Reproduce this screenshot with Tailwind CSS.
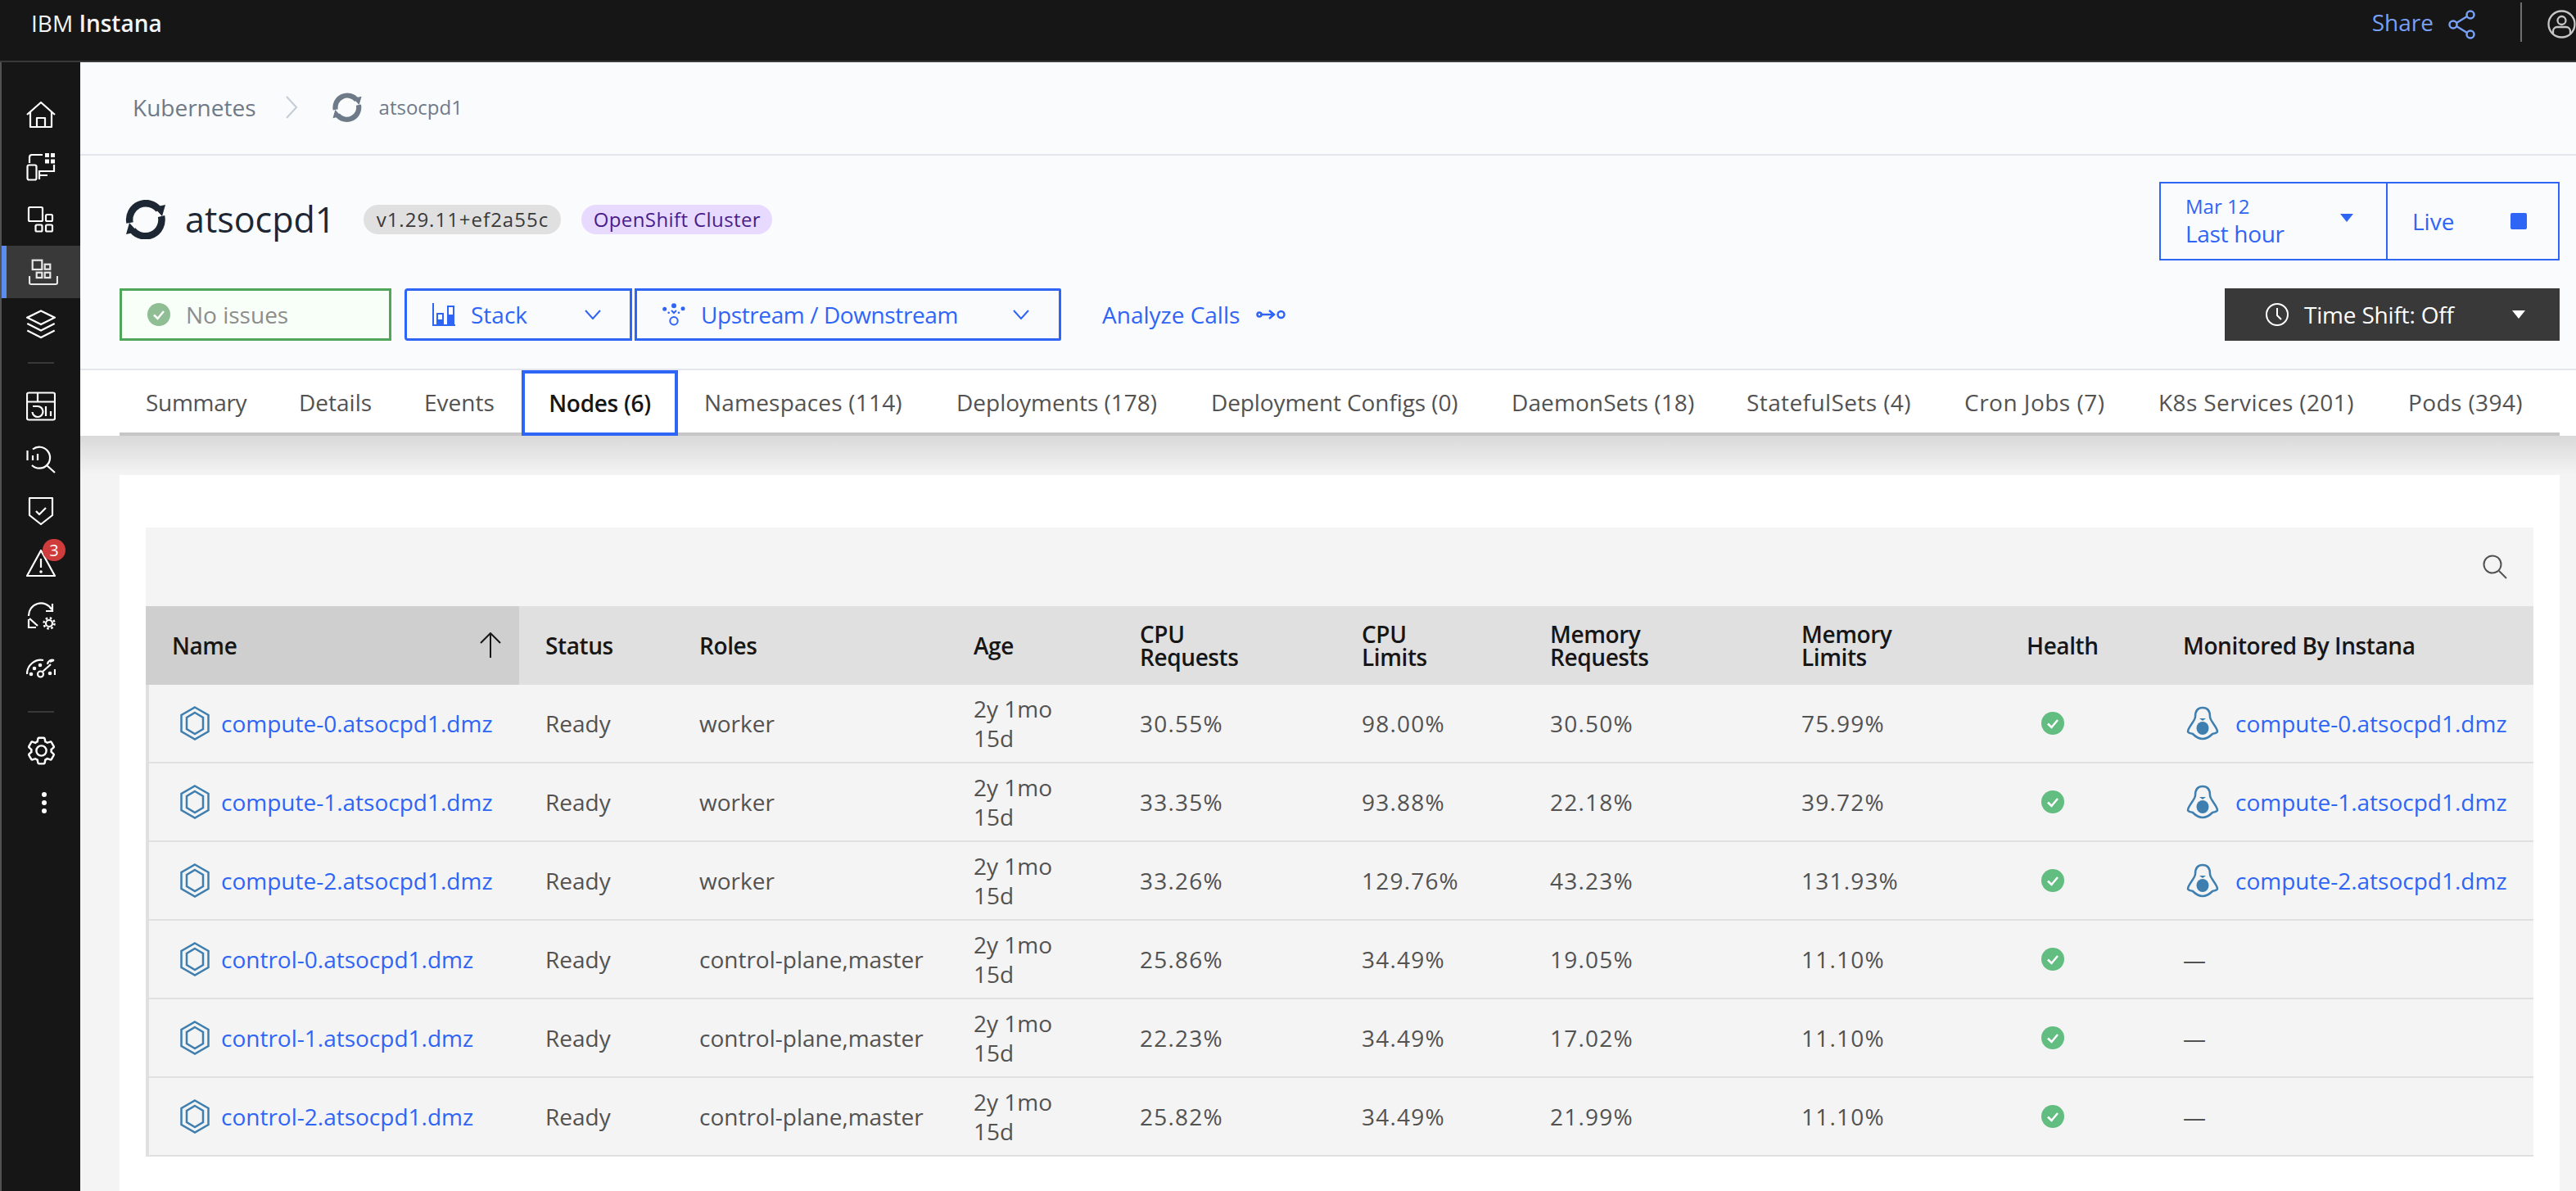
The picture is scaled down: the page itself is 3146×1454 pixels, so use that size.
<!doctype html>
<html><head><meta charset="utf-8"><script src="https://cdn.jsdelivr.net/npm/@tailwindcss/browser@4"></script></head>
<body class="h-[1454px] overflow-hidden bg-[#f4f4f4] font-['Open_Sans',sans-serif] text-[28px] leading-[36px] text-[#525252]">
<div class="flex h-full flex-col">
  <header class="flex h-[76px] shrink-0 items-start border-b-2 border-[#393939] bg-[#161616] pl-[38px] text-[#f4f4f4]">
    <div class="mt-[8px] text-[28px] leading-[40px]">IBM <span class="font-semibold">Instana</span></div>
    <div class="ml-auto mt-[8px] flex items-start text-[#78a0f5]">
      <span class="leading-[38px]">Share</span>
      <svg class="ml-[18px] mt-[4px]" width="34" height="36" viewBox="0 0 34 36" fill="none" stroke="currentColor" stroke-width="2.5"><circle cx="6" cy="18" r="4.5"/><circle cx="27" cy="6" r="4.5"/><circle cx="27" cy="30" r="4.5"/><path d="M10 16 23 8M10 20 23 28"/></svg>
      <div class="ml-[54px] mt-[-5px] h-[48px] w-[2px] bg-[#6f6f6f]"></div>
      <svg class="ml-[31px] mt-[4px]" width="35" height="35" viewBox="0 0 35 35" fill="none" stroke="#c6c6c6" stroke-width="2.3"><circle cx="17.5" cy="17.5" r="16"/><circle cx="17.5" cy="13" r="5"/><path d="M7 29V26a5 5 0 0 1 5-5H23a5 5 0 0 1 5 5V29"/></svg>
    </div>
  </header>
  <div class="flex min-h-0 flex-1">
    <nav class="flex w-[98px] shrink-0 flex-col border-l-2 border-[#525252] bg-[#161616] pt-[32px] text-white">
      <a class="flex h-[64px] items-center justify-center"><svg width="36" height="36" viewBox="0 0 36 36" fill="none" stroke="currentColor" stroke-width="2.2" stroke-linejoin="round"><path d="M1 18 18 3 35 18M5 15V33H31V15M13 33V22H23V33"/></svg></a>
      <a class="flex h-[64px] items-center justify-center"><svg width="36" height="36" viewBox="0 0 36 36" fill="none" stroke="currentColor" stroke-width="2.2"><rect x="1.5" y="15.5" width="11" height="18" rx="2"/><path d="M4 13V6a3 3 0 0 1 3-3H20M34 15V23H16V33M16 28H26"/><path fill="currentColor" stroke="none" d="M23 1h5v5h-5zM30 1h5v5h-5zM23 8.500h5v5h-5zM30 8.500h5v5h-5z"/></svg></a>
      <a class="flex h-[64px] items-center justify-center"><svg width="36" height="36" viewBox="0 0 36 36" fill="none" stroke="currentColor" stroke-width="2.2"><rect x="3" y="3" width="17" height="17" rx="1.500"/><rect x="24" y="12" width="8" height="8" rx="1.500"/><rect x="11.500" y="24.500" width="8" height="8" rx="1.500"/><rect x="24" y="24.500" width="8" height="8" rx="1.500"/></svg></a>
      <a class="flex h-[64px] items-center justify-center border-l-[6px] border-[#5b8def] bg-[#393939]"><svg width="36" height="36" viewBox="0 0 36 36" fill="none" stroke="#e8e8e8" stroke-width="2.2"><rect x="4.700" y="3.700" width="11.600" height="11.300"/><rect x="19.700" y="8.700" width="6.600" height="6"/><rect x="9.700" y="18.700" width="6.600" height="6.300"/><rect x="19.700" y="18.700" width="6.600" height="6.300"/><path d="M1 23V31a2 2 0 0 0 2 2H33a2 2 0 0 0 2-2V23"/></svg></a>
      <a class="flex h-[64px] items-center justify-center"><svg width="36" height="36" viewBox="0 0 36 36" fill="none" stroke="currentColor" stroke-width="2.2"><path d="M18 1.500 34.700 9.700 18 18 1.300 9.700ZM1.300 17 18 25.500 34.700 17M1.300 25.500 18 34 34.700 25.500"/></svg></a>
      <div class="mx-auto mb-[20px] mt-[14px] h-[2px] w-[32px] bg-[#393939]"></div>
      <a class="flex h-[64px] items-center justify-center"><svg width="36" height="36" viewBox="0 0 36 36" fill="none" stroke="currentColor" stroke-width="2.2"><rect x="1" y="1.500" width="34" height="33" rx="2"/><path d="M1 12.500H35M14 1.500V12.500M8 18H14A6.500 6.500 0 1 1 7.500 25M24 18V30M30 24V30"/></svg></a>
      <a class="flex h-[64px] items-center justify-center"><svg width="36" height="36" viewBox="0 0 36 36" fill="none" stroke="currentColor" stroke-width="2.2"><path d="M8 6.500A13 13 0 1 1 7 26M25 26 35 35M1.500 8V20M8 14V20M14 12V20"/></svg></a>
      <a class="flex h-[64px] items-center justify-center"><svg width="36" height="36" viewBox="0 0 36 36" fill="none" stroke="currentColor" stroke-width="2.2" stroke-linejoin="round"><path d="M4 2H32V23L18 34 4 23ZM12 18 16 22 24 14"/></svg></a>
      <a class="relative flex h-[64px] items-center justify-center"><svg width="36" height="36" viewBox="0 0 36 36" fill="none" stroke="currentColor" stroke-width="2.2" stroke-linejoin="round"><path d="M18 2 35 33H1ZM18 12V23"/><circle cx="18" cy="28" r="1.800" fill="currentColor" stroke="none"/></svg><span class="absolute left-[50px] top-[2px] flex h-[27px] w-[28px] items-center justify-center rounded-full bg-[#cf3c3c] text-[20px] leading-none">3</span></a>
      <a class="flex h-[64px] items-center justify-center"><svg width="36" height="36" viewBox="0 0 36 36" fill="none" stroke="currentColor" stroke-width="2.2"><path d="M3 18A15 15 0 0 1 31 10M32 3V12H24M3 22V32H12M4 21 14 30"/><circle cx="28" cy="27" r="4"/><circle cx="28" cy="27" r="6.500" stroke-dasharray="2.500 2.600" stroke-width="2.500"/></svg></a>
      <a class="flex h-[64px] items-center justify-center"><svg width="36" height="36" viewBox="0 0 36 36" fill="none" stroke="currentColor" stroke-width="2.2"><path d="M1 25A17 17 0 0 1 21 8M20 22 30 13M34 8A6 6 0 0 0 26 13M34 8 29 10"/><circle cx="17.500" cy="25" r="3.500"/><circle cx="6" cy="25" r="1.200" fill="currentColor"/><circle cx="10" cy="18" r="1.200" fill="currentColor"/><circle cx="17" cy="14" r="1.200" fill="currentColor"/><circle cx="29" cy="24" r="1.200" fill="currentColor"/><path d="M35 19V26"/></svg></a>
      <div class="mx-auto mb-[14px] mt-[20px] h-[2px] w-[32px] bg-[#393939]"></div>
      <a class="flex h-[64px] items-center justify-center"><svg width="39" height="39" viewBox="0 0 32 32" fill="currentColor"><path d="M27,16.76c0-.25,0-.5,0-.76s0-.51,0-.77l1.92-1.68A2,2,0,0,0,29.3,11L26.94,7a2,2,0,0,0-1.73-1,2,2,0,0,0-.64.1l-2.43.82a11.35,11.35,0,0,0-1.31-.75l-.51-2.52a2,2,0,0,0-2-1.61H13.64a2,2,0,0,0-2,1.61l-.51,2.52a11.48,11.48,0,0,0-1.32.75L7.43,6.06A2,2,0,0,0,6.79,6,2,2,0,0,0,5.06,7L2.7,11a2,2,0,0,0,.41,2.51L5,15.24c0,.25,0,.5,0,.76s0,.51,0,.77L3.11,18.45A2,2,0,0,0,2.7,21L5.06,25a2,2,0,0,0,1.73,1,2,2,0,0,0,.64-.1l2.43-.82a11.35,11.35,0,0,0,1.31.75l.51,2.52a2,2,0,0,0,2,1.61h4.72a2,2,0,0,0,2-1.61l.51-2.52a11.48,11.48,0,0,0,1.32-.75l2.43.82a2,2,0,0,0,.64.1,2,2,0,0,0,1.73-1L29.3,21a2,2,0,0,0-.41-2.51ZM25.21,24l-3.43-1.16a8.86,8.86,0,0,1-2.71,1.57L18.36,28H13.64l-.71-3.55a9.36,9.36,0,0,1-2.7-1.57L6.79,24,4.43,20l2.72-2.4a8.9,8.9,0,0,1,0-3.13L4.43,12,6.79,8l3.43,1.16a8.86,8.86,0,0,1,2.71-1.57L13.64,4h4.72l.71,3.55a9.36,9.36,0,0,1,2.7,1.57L25.21,8,27.57,12l-2.72,2.4a8.9,8.9,0,0,1,0,3.13L27.57,20Z"/><path d="M16,22a6,6,0,1,1,6-6A5.94,5.94,0,0,1,16,22Zm0-10a3.91,3.91,0,0,0-4,4,3.91,3.91,0,0,0,4,4,3.91,3.91,0,0,0,4-4A3.91,3.91,0,0,0,16,12Z"/></svg></a>
      <a class="flex h-[64px] items-center justify-center pl-[8px]"><svg width="6" height="28" viewBox="0 0 6 28" fill="currentColor"><circle cx="3" cy="4" r="3"/><circle cx="3" cy="14" r="3"/><circle cx="3" cy="24" r="3"/></svg></a>
    </nav>
    <main class="flex min-w-0 flex-1 flex-col">
      <div class="bg-[#fafbfd]">
        <div class="flex h-[114px] items-center border-b-2 border-[#e4e6ee] pl-[64px] pb-[2px] text-[#6f7a88]">
          <span>Kubernetes</span>
          <svg class="ml-[36px]" width="14" height="28" viewBox="0 0 14 28" fill="none" stroke="#c6ccd6" stroke-width="2"><path d="M1 1 13 14 1 27"/></svg>
          <svg class="ml-[42px]" width="38" height="36" viewBox="0 0 52 48"><g fill="none" stroke="currentColor" stroke-width="8.500"><path d="M42 12A20 20 0 0 0 6.500 28"/><path d="M10 37A20 20 0 0 0 45 20"/></g><path fill="currentColor" d="M36 9 50 6 46 20ZM16 39 2 42 6 28Z"/></svg>
          <span class="ml-[20px] text-[24px]">atsocpd1</span>
        </div>
        <div class="flex h-[262px] justify-between border-b-2 border-[#e4e6ee] pl-[48px] pr-[20px]">
          <div class="flex flex-col">
            <div class="mt-[54px] flex h-[48px] items-center">
              <svg class="ml-[6px]" width="52" height="48" viewBox="0 0 52 48"><g fill="none" stroke="#1c2733" stroke-width="8.500"><path d="M42 12A20 20 0 0 0 6.500 28"/><path d="M10 37A20 20 0 0 0 45 20"/></g><path fill="#1c2733" d="M36 9 50 6 46 20ZM16 39 2 42 6 28Z"/></svg>
              <span class="ml-[22px] text-[43px] leading-[48px] text-[#1c2733]">atsocpd1</span>
              <span class="ml-[35px] flex h-[36px] w-[241px] items-center justify-center rounded-full bg-[#e0e0e0] text-[24px] tracking-[1px] text-[#393939]">v1.29.11+ef2a55c</span>
              <span class="ml-[25px] flex h-[36px] w-[233px] items-center justify-center rounded-full bg-[#e8daff] text-[24px] tracking-[0.4px] text-[#491d8b]">OpenShift Cluster</span>
            </div>
            <div class="mt-[60px] flex h-[64px] items-stretch">
              <div class="flex w-[332px] items-center border-[3px] border-[#4fa55a] bg-[#f8fff9] pl-[31px] text-[#8d8d8d]">
                <svg width="28" height="28" viewBox="0 0 28 28"><circle cx="14" cy="14" r="14" fill="#8fbd94"/><path d="M8 14.500 12.500 19 20 10" fill="none" stroke="#fff" stroke-width="2.500"/></svg>
                <span class="ml-[19px]">No issues</span>
              </div>
              <div class="ml-[16px] flex w-[278px] items-center rounded-l-[4px] border-[3px] border-[#2f65f5] pl-[31px] text-[#2f65f5]">
                <svg width="28" height="28" viewBox="0 0 28 28" fill="none" stroke="currentColor" stroke-width="2"><path d="M1 0V27H28"/><rect x="6" y="13" width="7" height="14"/><rect x="19" y="4" width="7" height="23"/><path fill="currentColor" stroke="none" d="M6 20h7v7H6zM19 14h7v13h-7z"/></svg>
                <span class="ml-[19px]">Stack</span>
                <svg class="ml-auto mr-[35px]" width="20" height="12" viewBox="0 0 20 12" fill="none" stroke="currentColor" stroke-width="2"><path d="M1 1 10 11 19 1"/></svg>
              </div>
              <div class="ml-[3px] flex w-[521px] items-center rounded-r-[2px] border-[3px] border-[#2f65f5] pl-[31px] text-[#2f65f5]">
                <svg width="28" height="28" viewBox="0 0 28 28" fill="currentColor"><circle cx="2.700" cy="7.300" r="2.500"/><circle cx="14" cy="3.300" r="3"/><circle cx="25" cy="6.700" r="2.500"/><circle cx="7.700" cy="11.700" r="1.300"/><circle cx="20" cy="11.700" r="1.300"/><path d="M11 9 14 12 17 9" fill="none" stroke="currentColor" stroke-width="2"/><circle cx="14" cy="21.700" r="4.700" fill="none" stroke="currentColor" stroke-width="2"/></svg>
                <span class="ml-[19px] tracking-[-0.4px]">Upstream / Downstream</span>
                <svg class="ml-auto mr-[36px]" width="20" height="12" viewBox="0 0 20 12" fill="none" stroke="currentColor" stroke-width="2"><path d="M1 1 10 11 19 1"/></svg>
              </div>
              <div class="ml-[50px] flex items-center text-[#2f65f5]">
                <span>Analyze Calls</span>
                <svg class="ml-[20px]" width="36" height="14" viewBox="0 0 36 14" fill="none" stroke="currentColor" stroke-width="2.500"><circle cx="4" cy="7" r="2.500"/><path d="M7 7H22M16 2 22 7 16 12"/><circle cx="30.500" cy="7" r="4"/></svg>
              </div>
            </div>
          </div>
          <div class="flex flex-col items-end">
            <div class="mt-[32px] flex h-[96px] w-[489px] border-2 border-[#2f65f5] text-[#2f65f5]">
              <div class="relative flex w-[277px] flex-col justify-center border-r-2 border-[#2f65f5] pl-[30px]">
                <span class="text-[24px] leading-[30px]">Mar 12</span>
                <span class="leading-[36px] tracking-[-0.3px]">Last hour</span>
                <span class="absolute right-[40px] top-[37px] h-0 w-0 border-x-[8px] border-t-[10px] border-x-transparent border-t-[#2f65f5]"></span>
              </div>
              <div class="flex flex-1 items-center justify-between pl-[30px] pr-[38px]"><span>Live</span><span class="h-[20px] w-[20px] rounded-[2px] bg-[#2f65f5]"></span></div>
            </div>
            <div class="mt-[34px] flex h-[64px] w-[409px] items-center bg-[#393939] pl-[50px] text-white">
              <svg width="28" height="28" viewBox="0 0 28 28" fill="none" stroke="currentColor" stroke-width="2"><circle cx="14" cy="14" r="13"/><path d="M14 6V15L19 20"/></svg>
              <span class="ml-[19px] tracking-[-0.2px]">Time Shift: Off</span>
              <span class="ml-auto mr-[42px] h-0 w-0 border-x-[8px] border-t-[10px] border-x-transparent border-t-white"></span>
            </div>
          </div>
        </div>
      </div>
      <div class="bg-white pl-[48px] pr-[20px]">
        <div class="flex h-[80px] border-b-[4px] border-[#c6c6c6]">
          <a class="flex h-[78px] w-[187px] items-center pl-[32px] tracking-[-0.3px]">Summary</a>
          <a class="flex h-[78px] w-[153px] items-center pl-[32px]">Details</a>
          <a class="flex h-[78px] w-[151px] items-center pl-[32px]">Events</a>
          <a class="z-10 flex h-[80px] w-[191px] items-center justify-center border-4 border-[#2f65f5] bg-white font-semibold text-[#161616] tracking-[-0.3px]">Nodes (6)</a>
          <a class="flex h-[78px] w-[308px] items-center pl-[32px] tracking-[0.2px]">Namespaces (114)</a>
          <a class="flex h-[78px] w-[311px] items-center pl-[32px]">Deployments (178)</a>
          <a class="flex h-[78px] w-[367px] items-center pl-[32px] tracking-[-0.1px]">Deployment Configs (0)</a>
          <a class="flex h-[78px] w-[287px] items-center pl-[32px] tracking-[0.1px]">DaemonSets (18)</a>
          <a class="flex h-[78px] w-[266px] items-center pl-[32px] tracking-[0.4px]">StatefulSets (4)</a>
          <a class="flex h-[78px] w-[237px] items-center pl-[32px] tracking-[0.5px]">Cron Jobs (7)</a>
          <a class="flex h-[78px] w-[305px] items-center pl-[32px] tracking-[0.4px]">K8s Services (201)</a>
          <a class="flex h-[78px] flex-1 items-center pl-[32px] tracking-[0.4px]">Pods (394)</a>
        </div>
      </div>
      <div class="h-[48px] shrink-0 bg-linear-to-b from-[#d9d9d9] to-[#f4f4f4]"></div>
      <div class="ml-[48px] mr-[20px] flex-1 bg-white px-[32px] pt-[64px]">
        <div class="flex h-[96px] items-center justify-end bg-[#f4f4f4] pr-[32px]">
          <svg width="30" height="30" viewBox="0 0 30 30" fill="none" stroke="#525252" stroke-width="2"><circle cx="12" cy="12" r="10.500"/><path d="M20 20 29 29"/></svg>
        </div>
        <table class="w-full table-fixed border-separate border-spacing-0 bg-[#f4f4f4] [&_td]:h-[96px] [&_td]:border-b-2 [&_td]:border-[#e0e0e0] [&_td]:pl-[32px] [&_td]:leading-[36px] [&_td:nth-child(n+5):nth-child(-n+8)]:tracking-[1.2px] [&_th]:h-[96px] [&_th]:bg-[#e0e0e0] [&_th]:pl-[32px] [&_th]:text-left [&_th]:font-semibold [&_th]:leading-[28px] [&_th]:text-[#161616] [&_th]:tracking-[-0.4px]">
          <colgroup><col class="w-[456px]"><col class="w-[188px]"><col class="w-[335px]"><col class="w-[203px]"><col class="w-[271px]"><col class="w-[230px]"><col class="w-[307px]"><col class="w-[275px]"><col class="w-[191px]"><col class="w-[460px]"></colgroup>
          <thead><tr>
            <th class="!bg-[#cfcfcf]"><div class="flex items-center justify-between pr-[22px]"><span>Name</span><svg width="26" height="32" viewBox="0 0 26 32" fill="none" stroke="#161616" stroke-width="2"><path d="M13 1V31M1 13 13 1 25 13"/></svg></div></th>
            <th>Status</th><th>Roles</th><th>Age</th><th>CPU<br>Requests</th><th>CPU<br>Limits</th><th>Memory<br>Requests</th><th>Memory<br>Limits</th><th>Health</th><th>Monitored By Instana</th>
          </tr></thead>
          <tbody>
            <tr>
              <td class="border-l-4 border-l-[#4fa55a] !pl-[38px]"><div class="flex items-center gap-[14px] text-[#2f65f5]"><svg width="36" height="42" viewBox="0 0 36 42" fill="none" stroke="#3f7fb0" stroke-width="2.500"><path d="M18 1.500 34.500 11V31L18 40.500 1.500 31V11Z"/><path d="M18 8 28 14V28L18 34 8 28V14Z"/></svg><span>compute-0.atsocpd1.dmz</span></div></td>
              <td>Ready</td><td>worker</td><td>2y 1mo<br>15d</td><td>30.55%</td><td>98.00%</td><td>30.50%</td><td>75.99%</td>
              <td><svg class="ml-[18px]" width="28" height="28" viewBox="0 0 28 28"><circle cx="14" cy="14" r="14" fill="#62bd80"/><path d="M8 14.500 12.500 19 20 10" fill="none" stroke="#fff" stroke-width="2.500"/></svg></td>
              <td><div class="flex items-center gap-[20px] text-[#2f65f5]"><svg class="ml-[4px]" width="40" height="42" viewBox="0 0 40 42" fill="none"><path d="M20 2C13 2 11 7 11 13C11 18 2 26 2 31C2 33 5 33 8 34C11 37 15 40 20 40C25 40 29 37 32 34C35 33 38 33 38 31C38 26 29 18 29 13C29 7 27 2 20 2Z" stroke="#3f7fb0" stroke-width="2.500"/><ellipse cx="20" cy="27" rx="7.500" ry="8" fill="#3f7fb0"/><path d="M16 15H24L20 18Z" fill="#3f7fb0"/></svg><span>compute-0.atsocpd1.dmz</span></div></td>
            </tr>
            <tr>
              <td class="border-l-4 border-l-[#4fa55a] !pl-[38px]"><div class="flex items-center gap-[14px] text-[#2f65f5]"><svg width="36" height="42" viewBox="0 0 36 42" fill="none" stroke="#3f7fb0" stroke-width="2.500"><path d="M18 1.500 34.500 11V31L18 40.500 1.500 31V11Z"/><path d="M18 8 28 14V28L18 34 8 28V14Z"/></svg><span>compute-1.atsocpd1.dmz</span></div></td>
              <td>Ready</td><td>worker</td><td>2y 1mo<br>15d</td><td>33.35%</td><td>93.88%</td><td>22.18%</td><td>39.72%</td>
              <td><svg class="ml-[18px]" width="28" height="28" viewBox="0 0 28 28"><circle cx="14" cy="14" r="14" fill="#62bd80"/><path d="M8 14.500 12.500 19 20 10" fill="none" stroke="#fff" stroke-width="2.500"/></svg></td>
              <td><div class="flex items-center gap-[20px] text-[#2f65f5]"><svg class="ml-[4px]" width="40" height="42" viewBox="0 0 40 42" fill="none"><path d="M20 2C13 2 11 7 11 13C11 18 2 26 2 31C2 33 5 33 8 34C11 37 15 40 20 40C25 40 29 37 32 34C35 33 38 33 38 31C38 26 29 18 29 13C29 7 27 2 20 2Z" stroke="#3f7fb0" stroke-width="2.500"/><ellipse cx="20" cy="27" rx="7.500" ry="8" fill="#3f7fb0"/><path d="M16 15H24L20 18Z" fill="#3f7fb0"/></svg><span>compute-1.atsocpd1.dmz</span></div></td>
            </tr>
            <tr>
              <td class="border-l-4 border-l-[#4fa55a] !pl-[38px]"><div class="flex items-center gap-[14px] text-[#2f65f5]"><svg width="36" height="42" viewBox="0 0 36 42" fill="none" stroke="#3f7fb0" stroke-width="2.500"><path d="M18 1.500 34.500 11V31L18 40.500 1.500 31V11Z"/><path d="M18 8 28 14V28L18 34 8 28V14Z"/></svg><span>compute-2.atsocpd1.dmz</span></div></td>
              <td>Ready</td><td>worker</td><td>2y 1mo<br>15d</td><td>33.26%</td><td>129.76%</td><td>43.23%</td><td>131.93%</td>
              <td><svg class="ml-[18px]" width="28" height="28" viewBox="0 0 28 28"><circle cx="14" cy="14" r="14" fill="#62bd80"/><path d="M8 14.500 12.500 19 20 10" fill="none" stroke="#fff" stroke-width="2.500"/></svg></td>
              <td><div class="flex items-center gap-[20px] text-[#2f65f5]"><svg class="ml-[4px]" width="40" height="42" viewBox="0 0 40 42" fill="none"><path d="M20 2C13 2 11 7 11 13C11 18 2 26 2 31C2 33 5 33 8 34C11 37 15 40 20 40C25 40 29 37 32 34C35 33 38 33 38 31C38 26 29 18 29 13C29 7 27 2 20 2Z" stroke="#3f7fb0" stroke-width="2.500"/><ellipse cx="20" cy="27" rx="7.500" ry="8" fill="#3f7fb0"/><path d="M16 15H24L20 18Z" fill="#3f7fb0"/></svg><span>compute-2.atsocpd1.dmz</span></div></td>
            </tr>
            <tr>
              <td class="border-l-4 border-l-[#4fa55a] !pl-[38px]"><div class="flex items-center gap-[14px] text-[#2f65f5]"><svg width="36" height="42" viewBox="0 0 36 42" fill="none" stroke="#3f7fb0" stroke-width="2.500"><path d="M18 1.500 34.500 11V31L18 40.500 1.500 31V11Z"/><path d="M18 8 28 14V28L18 34 8 28V14Z"/></svg><span>control-0.atsocpd1.dmz</span></div></td>
              <td>Ready</td><td>control-plane,master</td><td>2y 1mo<br>15d</td><td>25.86%</td><td>34.49%</td><td>19.05%</td><td>11.10%</td>
              <td><svg class="ml-[18px]" width="28" height="28" viewBox="0 0 28 28"><circle cx="14" cy="14" r="14" fill="#62bd80"/><path d="M8 14.500 12.500 19 20 10" fill="none" stroke="#fff" stroke-width="2.500"/></svg></td>
              <td>—</td>
            </tr>
            <tr>
              <td class="border-l-4 border-l-[#4fa55a] !pl-[38px]"><div class="flex items-center gap-[14px] text-[#2f65f5]"><svg width="36" height="42" viewBox="0 0 36 42" fill="none" stroke="#3f7fb0" stroke-width="2.500"><path d="M18 1.500 34.500 11V31L18 40.500 1.500 31V11Z"/><path d="M18 8 28 14V28L18 34 8 28V14Z"/></svg><span>control-1.atsocpd1.dmz</span></div></td>
              <td>Ready</td><td>control-plane,master</td><td>2y 1mo<br>15d</td><td>22.23%</td><td>34.49%</td><td>17.02%</td><td>11.10%</td>
              <td><svg class="ml-[18px]" width="28" height="28" viewBox="0 0 28 28"><circle cx="14" cy="14" r="14" fill="#62bd80"/><path d="M8 14.500 12.500 19 20 10" fill="none" stroke="#fff" stroke-width="2.500"/></svg></td>
              <td>—</td>
            </tr>
            <tr>
              <td class="border-l-4 border-l-[#4fa55a] !pl-[38px]"><div class="flex items-center gap-[14px] text-[#2f65f5]"><svg width="36" height="42" viewBox="0 0 36 42" fill="none" stroke="#3f7fb0" stroke-width="2.500"><path d="M18 1.500 34.500 11V31L18 40.500 1.500 31V11Z"/><path d="M18 8 28 14V28L18 34 8 28V14Z"/></svg><span>control-2.atsocpd1.dmz</span></div></td>
              <td>Ready</td><td>control-plane,master</td><td>2y 1mo<br>15d</td><td>25.82%</td><td>34.49%</td><td>21.99%</td><td>11.10%</td>
              <td><svg class="ml-[18px]" width="28" height="28" viewBox="0 0 28 28"><circle cx="14" cy="14" r="14" fill="#62bd80"/><path d="M8 14.500 12.500 19 20 10" fill="none" stroke="#fff" stroke-width="2.500"/></svg></td>
              <td>—</td>
            </tr>
          </tbody>
        </table>
      </div>
    </main>
  </div>
</div>
</body></html>
